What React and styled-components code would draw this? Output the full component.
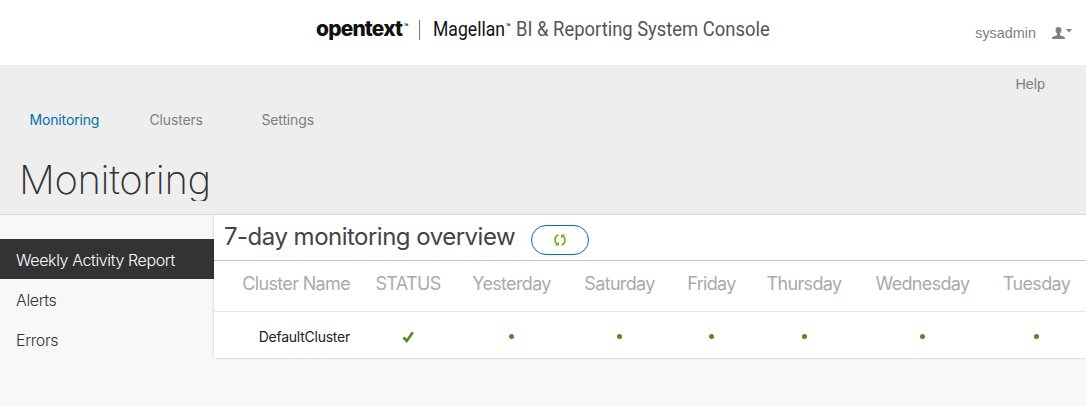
import React from "react";
import styled, { createGlobalStyle } from "styled-components";

const Global = createGlobalStyle`
  *, *::before, *::after { box-sizing: border-box; }
  body { margin: 0; background: #f8f8f8; font-family: Inter, "Liberation Sans", sans-serif; color: #333; }
`;
const Page = styled.div`height: 406px; overflow: hidden; background: #f8f8f8;`;
const Top = styled.header`
  height: 65px; background: #fff; display: flex; justify-content: space-between;
`;
const Brand = styled.div`
  display: flex; align-items: flex-start; padding: 16px 0 0 316px; white-space: nowrap;
  font-family: Roboto, sans-serif; font-size: 20px; line-height: 26px; color: #111;
`;
const Word = styled.span`
  display: block; width: ${(p) => p.$width}px; color: ${(p) => p.$color || "#111"};
  font-family: ${(p) => p.$family || "Roboto, sans-serif"};
  font-weight: ${(p) => p.$weight || 400}; font-size: ${(p) => p.$size || 20}px;
  letter-spacing: ${(p) => p.$track || 0}px;
  transform: scaleX(${(p) => p.$scale || 1}); transform-origin: left;
`;
const Mark = styled(Word)`font-weight: 700; line-height: 22px;`;
const Divider = styled.i`
  width: 1px; height: 20px; margin: 4px 13px 0 8px; background: #777;
`;
const User = styled.div`
  display: flex; align-items: center; padding: 1px 14px 0 0; color: #808080;
  font: 14.4px/20px "Liberation Sans", sans-serif;
  svg:first-of-type { margin-left: 16px; }
`;
const Head = styled.div`
  height: 150px; background: #eee; border-bottom: 1px solid #d8d8d8;
`;
const Help = styled.div`
  padding: 9px 41px 0 0; text-align: right; color: #808080;
  font: 14.4px/20px "Liberation Sans", sans-serif;
`;
const Nav = styled.nav`
  display: flex; padding: 15px 0 0 29.5px; font-size: 14px; line-height: 22px; letter-spacing: -0.15px;
`;
const NavLink = styled.a`
  width: ${(p) => p.$width}px; color: ${(p) => (p.$active ? "#0072aa" : "#808080")};
`;
const Title = styled.h1`
  margin: 22px 0 0 18px; padding-left: 1px; height: 48px; font-size: 40px; line-height: 54px; font-weight: 250;
  letter-spacing: -0.4px; color: #333; white-space: nowrap; clip-path: inset(0);
`;
const Body = styled.div`display: flex; align-items: flex-start;`;
const Side = styled.aside`width: 214px; padding-top: 24px;`;
const SideItem = styled.a`
  display: block; height: 40px; padding-left: 16px; line-height: 42px; font-size: 16px;
  font-weight: 330; letter-spacing: -0.38px; white-space: nowrap;
  background: ${(p) => (p.$active ? "#333" : "transparent")};
  color: ${(p) => (p.$active ? "#fff" : "#333")};
`;
const Panel = styled.main`
  width: 872px; height: 143px; background: #fff; box-shadow: 0 0 3px rgba(0,0,0,.2);
  clip-path: inset(0 0 -5px -5px);
`;
const PanelHead = styled.div`
  display: flex; height: 46px; padding-left: 10px; border-bottom: 1px solid #c6c6c6;
`;
const PanelTitle = styled.h2`
  margin: 0; width: 307px; font-size: 24px; line-height: 44px; font-weight: 400;
  letter-spacing: -0.51px; color: #444; white-space: nowrap;
`;
const Refresh = styled.button`
  width: 58px; height: 30px; margin-top: 10px; padding: 0; border: 1px solid #0072aa; border-radius: 15px;
  background: #fff; display: flex; align-items: center; justify-content: center;
`;
const Table = styled.table`
  width: 868px; table-layout: fixed; border-collapse: collapse;
`;
const Th = styled.th`
  height: 50px; padding: 0 ${(p) => (p.$first ? 13 : 0)}px 6px 0; text-align: ${(p) => (p.$first ? "right" : "center")};
  font-size: 18px; font-weight: 400; letter-spacing: -0.66px; color: #aaa; white-space: nowrap;
`;
const Rule = styled.div`height: 1px; background: #e6e6e6;`;
const Td = styled.td`
  height: 46px; padding: 3px ${(p) => (p.$first ? 13 : 0)}px 0 0; text-align: ${(p) => (p.$first ? "right" : "center")};
  font-size: 14px; letter-spacing: -0.24px; color: #222; white-space: nowrap;
  svg { display: block; margin: 0 auto; }
`;
const Dot = styled.i`
  display: block; width: 5px; height: 5px; margin: 0 auto; border-radius: 50%; background: #508c26;
`;

const columns = [
  ["Cluster Name", 149], ["STATUS", 90], ["Yesterday", 117], ["Saturday", 99],
  ["Friday", 85], ["Thursday", 100], ["Wednesday", 137], ["Tuesday", 91],
];
const Cols = () => <colgroup>{columns.map(([n, w]) => <col key={n} style={{ width: w }} />)}</colgroup>;

const Person = () => (
  <svg width="13" height="12" viewBox="0 0 12 12" preserveAspectRatio="none" fill="#808080">
    <path d="M6 0C4.2 0 3.2 1.2 3.3 3c0 1.5.5 2.7 1.3 3.5v1.700L1.3 9.400C.4 9.800 0 10.400 0 12h12c0-1.600-.4-2.200-1.3-2.600L7.400 8.200V6.5C8.200 5.700 8.700 4.500 8.700 3 8.800 1.200 7.800 0 6 0Z" />
  </svg>
);
const CaretSvg = styled.svg`margin: -4px 0 0 1px;`;
const Caret = () => (
  <CaretSvg width="6" height="4" viewBox="0 0 6 4"><path d="M0 0h6L3 3.500Z" fill="#808080" /></CaretSvg>
);
const RefreshIcon = () => (
  <svg width="12" height="12" viewBox="0 0 12 12">
    <g fill="none" stroke="#6cb31c" strokeWidth="1.700">
      <path d="M4.600 1C2 1.800 1 3.800 1 6c0 1.700.6 3 1.900 4" /><path d="M7.400 11c2.600-.8 3.600-2.800 3.600-5 0-1.700-.6-3-1.900-4" />
    </g>
    <path d="M5 7.500v4H1ZM7 4.500v-4h4Z" fill="#6cb31c" />
  </svg>
);
const Check = () => (
  <svg width="12" height="12" viewBox="0 0 12 12"><path d="M1.500 6.500 4.700 9.900 10.900 1.200" fill="none" stroke="#508c26" strokeWidth="2.600" /></svg>
);

export default function App() {
  return (
    <Page>
      <Global />
      <Top>
        <Brand>
          <Word $width={88} $family='Inter, sans-serif' $weight={800} $size={20.5} $track={-0.8} $scale={1.02}>opentext</Word>
          <Mark $width={7} $size={9} $scale={0.8}>™</Mark>
          <Divider />
          <Word $width={73} $scale={0.88}>Magellan</Word>
          <Mark $width={10} $size={9} $scale={0.8}>™</Mark>
          <Word $width={254} $color="#555" $scale={0.92}>BI &amp; Reporting System Console</Word>
        </Brand>
        <User><span>sysadmin</span><Person /><Caret /></User>
      </Top>
      <Head>
        <Help>Help</Help>
        <Nav>
          <NavLink $width={120} $active>Monitoring</NavLink>
          <NavLink $width={112}>Clusters</NavLink>
          <NavLink $width={60}>Settings</NavLink>
        </Nav>
        <Title>Monitoring</Title>
      </Head>
      <Body>
        <Side>
          <SideItem $active>Weekly Activity Report</SideItem>
          <SideItem>Alerts</SideItem>
          <SideItem>Errors</SideItem>
        </Side>
        <Panel>
          <PanelHead>
            <PanelTitle>7-day monitoring overview</PanelTitle>
            <Refresh aria-label="Refresh"><RefreshIcon /></Refresh>
          </PanelHead>
          <Table><Cols /><thead><tr>{columns.map(([n], i) => <Th key={n} $first={i === 0}>{n}</Th>)}</tr></thead></Table>
          <Rule />
          <Table><Cols /><tbody><tr>
            <Td $first>DefaultCluster</Td>
            <Td><Check /></Td>
            {columns.slice(2).map(([n]) => <Td key={n}><Dot /></Td>)}
          </tr></tbody></Table>
        </Panel>
      </Body>
    </Page>
  );
}
